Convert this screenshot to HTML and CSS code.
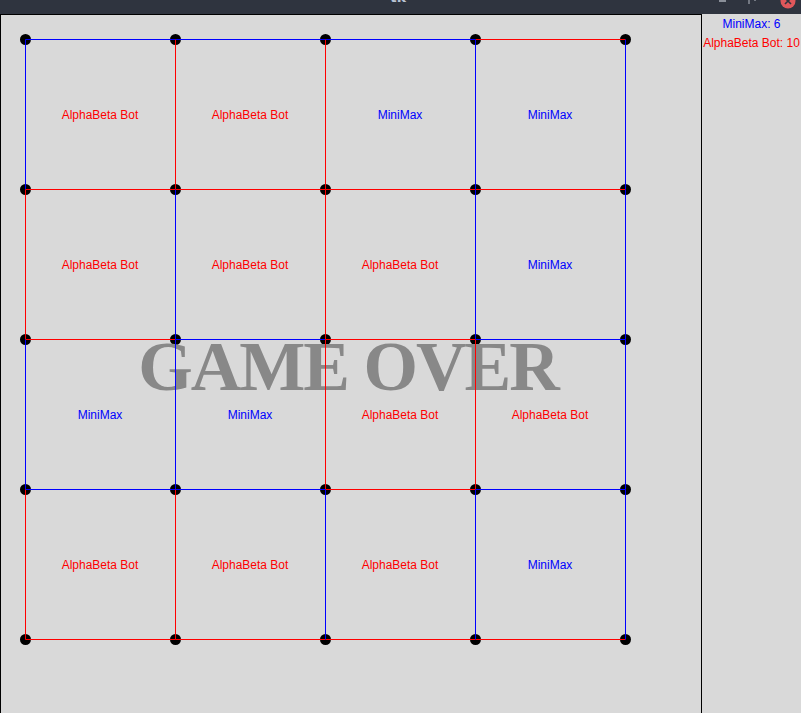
FILE: index.html
```html
<!DOCTYPE html>
<html>
<head>
<meta charset="utf-8">
<link rel="stylesheet" href="styles.css">
</head>
<body>
<div class="titlebar">
  <div class="tb-side"></div>
  <div class="tb-title">tk</div>
  <div class="tb-side tb-controls">
    <span class="ctl-min"></span>
    <svg class="ctl-max" width="10" height="10" viewBox="0 0 10 10"><path d="M1 0 L1 4 M6 0 L8 0" stroke="#8a8f99" stroke-width="1.5" fill="none"/></svg>
    <svg class="ctl-close" width="16" height="10" viewBox="0 0 16 10"><circle cx="8" cy="1" r="7.5" fill="#e0575b"/><path d="M5 -2 L11 4 M11 -2 L5 4" stroke="#2f343f" stroke-width="1.6"/></svg>
  </div>
</div>
<div class="main">
  <div class="canvas">
    <svg class="board" width="700" height="698" viewBox="0 0 700 698">
      <g class="dots" fill="#000">
        <circle cx="24.5" cy="24.5" r="5.5"/><circle cx="174.5" cy="24.5" r="5.5"/><circle cx="324.5" cy="24.5" r="5.5"/><circle cx="474.5" cy="24.5" r="5.5"/><circle cx="624.5" cy="24.5" r="5.5"/>
        <circle cx="24.5" cy="174.5" r="5.5"/><circle cx="174.5" cy="174.5" r="5.5"/><circle cx="324.5" cy="174.5" r="5.5"/><circle cx="474.5" cy="174.5" r="5.5"/><circle cx="624.5" cy="174.5" r="5.5"/>
        <circle cx="24.5" cy="324.5" r="5.5"/><circle cx="174.5" cy="324.5" r="5.5"/><circle cx="324.5" cy="324.5" r="5.5"/><circle cx="474.5" cy="324.5" r="5.5"/><circle cx="624.5" cy="324.5" r="5.5"/>
        <circle cx="24.5" cy="474.5" r="5.5"/><circle cx="174.5" cy="474.5" r="5.5"/><circle cx="324.5" cy="474.5" r="5.5"/><circle cx="474.5" cy="474.5" r="5.5"/><circle cx="624.5" cy="474.5" r="5.5"/>
        <circle cx="24.5" cy="624.5" r="5.5"/><circle cx="174.5" cy="624.5" r="5.5"/><circle cx="324.5" cy="624.5" r="5.5"/><circle cx="474.5" cy="624.5" r="5.5"/><circle cx="624.5" cy="624.5" r="5.5"/>
      </g>
      <text class="gameover" x="347" y="375" text-anchor="middle">GAME OVER</text>
      <g class="edges" stroke-width="1" fill="none">
        <path class="b" d="M24.5 24.5 H174.5"/><path class="b" d="M174.5 24.5 H324.5"/><path class="b" d="M324.5 24.5 H474.5"/><path class="r" d="M474.5 24.5 H624.5"/>
        <path class="r" d="M24.5 174.5 H174.5"/><path class="r" d="M174.5 174.5 H324.5"/><path class="r" d="M324.5 174.5 H474.5"/><path class="r" d="M474.5 174.5 H624.5"/>
        <path class="r" d="M24.5 324.5 H174.5"/><path class="b" d="M174.5 324.5 H324.5"/><path class="r" d="M324.5 324.5 H474.5"/><path class="b" d="M474.5 324.5 H624.5"/>
        <path class="b" d="M24.5 474.5 H174.5"/><path class="b" d="M174.5 474.5 H324.5"/><path class="r" d="M324.5 474.5 H474.5"/><path class="b" d="M474.5 474.5 H624.5"/>
        <path class="r" d="M24.5 624.5 H174.5"/><path class="r" d="M174.5 624.5 H324.5"/><path class="r" d="M324.5 624.5 H474.5"/><path class="r" d="M474.5 624.5 H624.5"/>
        <path class="b" d="M24.5 24.5 V174.5"/><path class="r" d="M24.5 174.5 V324.5"/><path class="b" d="M24.5 324.5 V474.5"/><path class="r" d="M24.5 474.5 V624.5"/>
        <path class="r" d="M174.5 24.5 V174.5"/><path class="b" d="M174.5 174.5 V324.5"/><path class="b" d="M174.5 324.5 V474.5"/><path class="r" d="M174.5 474.5 V624.5"/>
        <path class="r" d="M324.5 24.5 V174.5"/><path class="r" d="M324.5 174.5 V324.5"/><path class="r" d="M324.5 324.5 V474.5"/><path class="b" d="M324.5 474.5 V624.5"/>
        <path class="b" d="M474.5 24.5 V174.5"/><path class="b" d="M474.5 174.5 V324.5"/><path class="r" d="M474.5 324.5 V474.5"/><path class="b" d="M474.5 474.5 V624.5"/>
        <path class="b" d="M624.5 24.5 V174.5"/><path class="b" d="M624.5 174.5 V324.5"/><path class="b" d="M624.5 324.5 V474.5"/><path class="b" d="M624.5 474.5 V624.5"/>
      </g>
      <g class="labels" text-anchor="middle">
        <text class="ab" x="99" y="104">AlphaBeta Bot</text><text class="ab" x="249" y="104">AlphaBeta Bot</text><text class="mm" x="399" y="104">MiniMax</text><text class="mm" x="549" y="104">MiniMax</text>
        <text class="ab" x="99" y="254">AlphaBeta Bot</text><text class="ab" x="249" y="254">AlphaBeta Bot</text><text class="ab" x="399" y="254">AlphaBeta Bot</text><text class="mm" x="549" y="254">MiniMax</text>
        <text class="mm" x="99" y="404">MiniMax</text><text class="mm" x="249" y="404">MiniMax</text><text class="ab" x="399" y="404">AlphaBeta Bot</text><text class="ab" x="549" y="404">AlphaBeta Bot</text>
        <text class="ab" x="99" y="554">AlphaBeta Bot</text><text class="ab" x="249" y="554">AlphaBeta Bot</text><text class="ab" x="399" y="554">AlphaBeta Bot</text><text class="mm" x="549" y="554">MiniMax</text>
      </g>
    </svg>
  </div>
  <div class="panel">
    <div class="score mm-text">MiniMax: 6</div>
    <div class="score ab-text">AlphaBeta Bot: 10</div>
  </div>
</div>
</body>
</html>
```
FILE: styles.css
```css
html, body {
  margin: 0;
  padding: 0;
  width: 801px;
  height: 713px;
  overflow: hidden;
  background: #d9d9d9;
  font-family: "Liberation Sans", Arial, sans-serif;
}
.titlebar {
  height: 14px;
  background: #2f343f;
  display: flex;
  align-items: flex-start;
  overflow: hidden;
}
.tb-side {
  width: 200px;
  display: flex;
}
.tb-title {
  flex: 1;
  text-align: center;
  color: #b9c3d3;
  font-family: "DejaVu Sans", sans-serif;
  font-weight: bold;
  font-size: 14px;
  line-height: 14px;
  margin-top: -10px;
}
.tb-controls {
  justify-content: flex-end;
  align-items: flex-start;
  gap: 22px;
  padding-right: 5px;
}
.ctl-min {
  width: 7px;
  height: 2px;
  background: #8a8f99;
}
.ctl-max,
.ctl-close {
  display: block;
}
.main {
  display: flex;
  height: 699px;
}
.canvas {
  width: 700px;
  height: 698px;
  border: 1px solid #000;
  border-bottom: none;
  background: #d9d9d9;
}
.board {
  display: block;
}
.edges .b { stroke: #0000ff; }
.edges .r { stroke: #ff0000; }
.gameover {
  font-family: "Liberation Serif", "Times New Roman", serif;
  font-weight: bold;
  font-size: 70px;
  letter-spacing: -2px;
  fill: #888888;
}
.labels text {
  font-family: "Liberation Sans", Arial, sans-serif;
  font-size: 12px;
}
.labels .ab { fill: #ff0000; }
.labels .mm { fill: #0000ff; }
.panel {
  width: 99px;
  display: flex;
  flex-direction: column;
  align-items: center;
  padding-top: 1px;
}
.score {
  font-size: 12px;
  line-height: 19px;
  white-space: nowrap;
}
.mm-text { color: #0000ff; }
.ab-text { color: #ff0000; }
```
